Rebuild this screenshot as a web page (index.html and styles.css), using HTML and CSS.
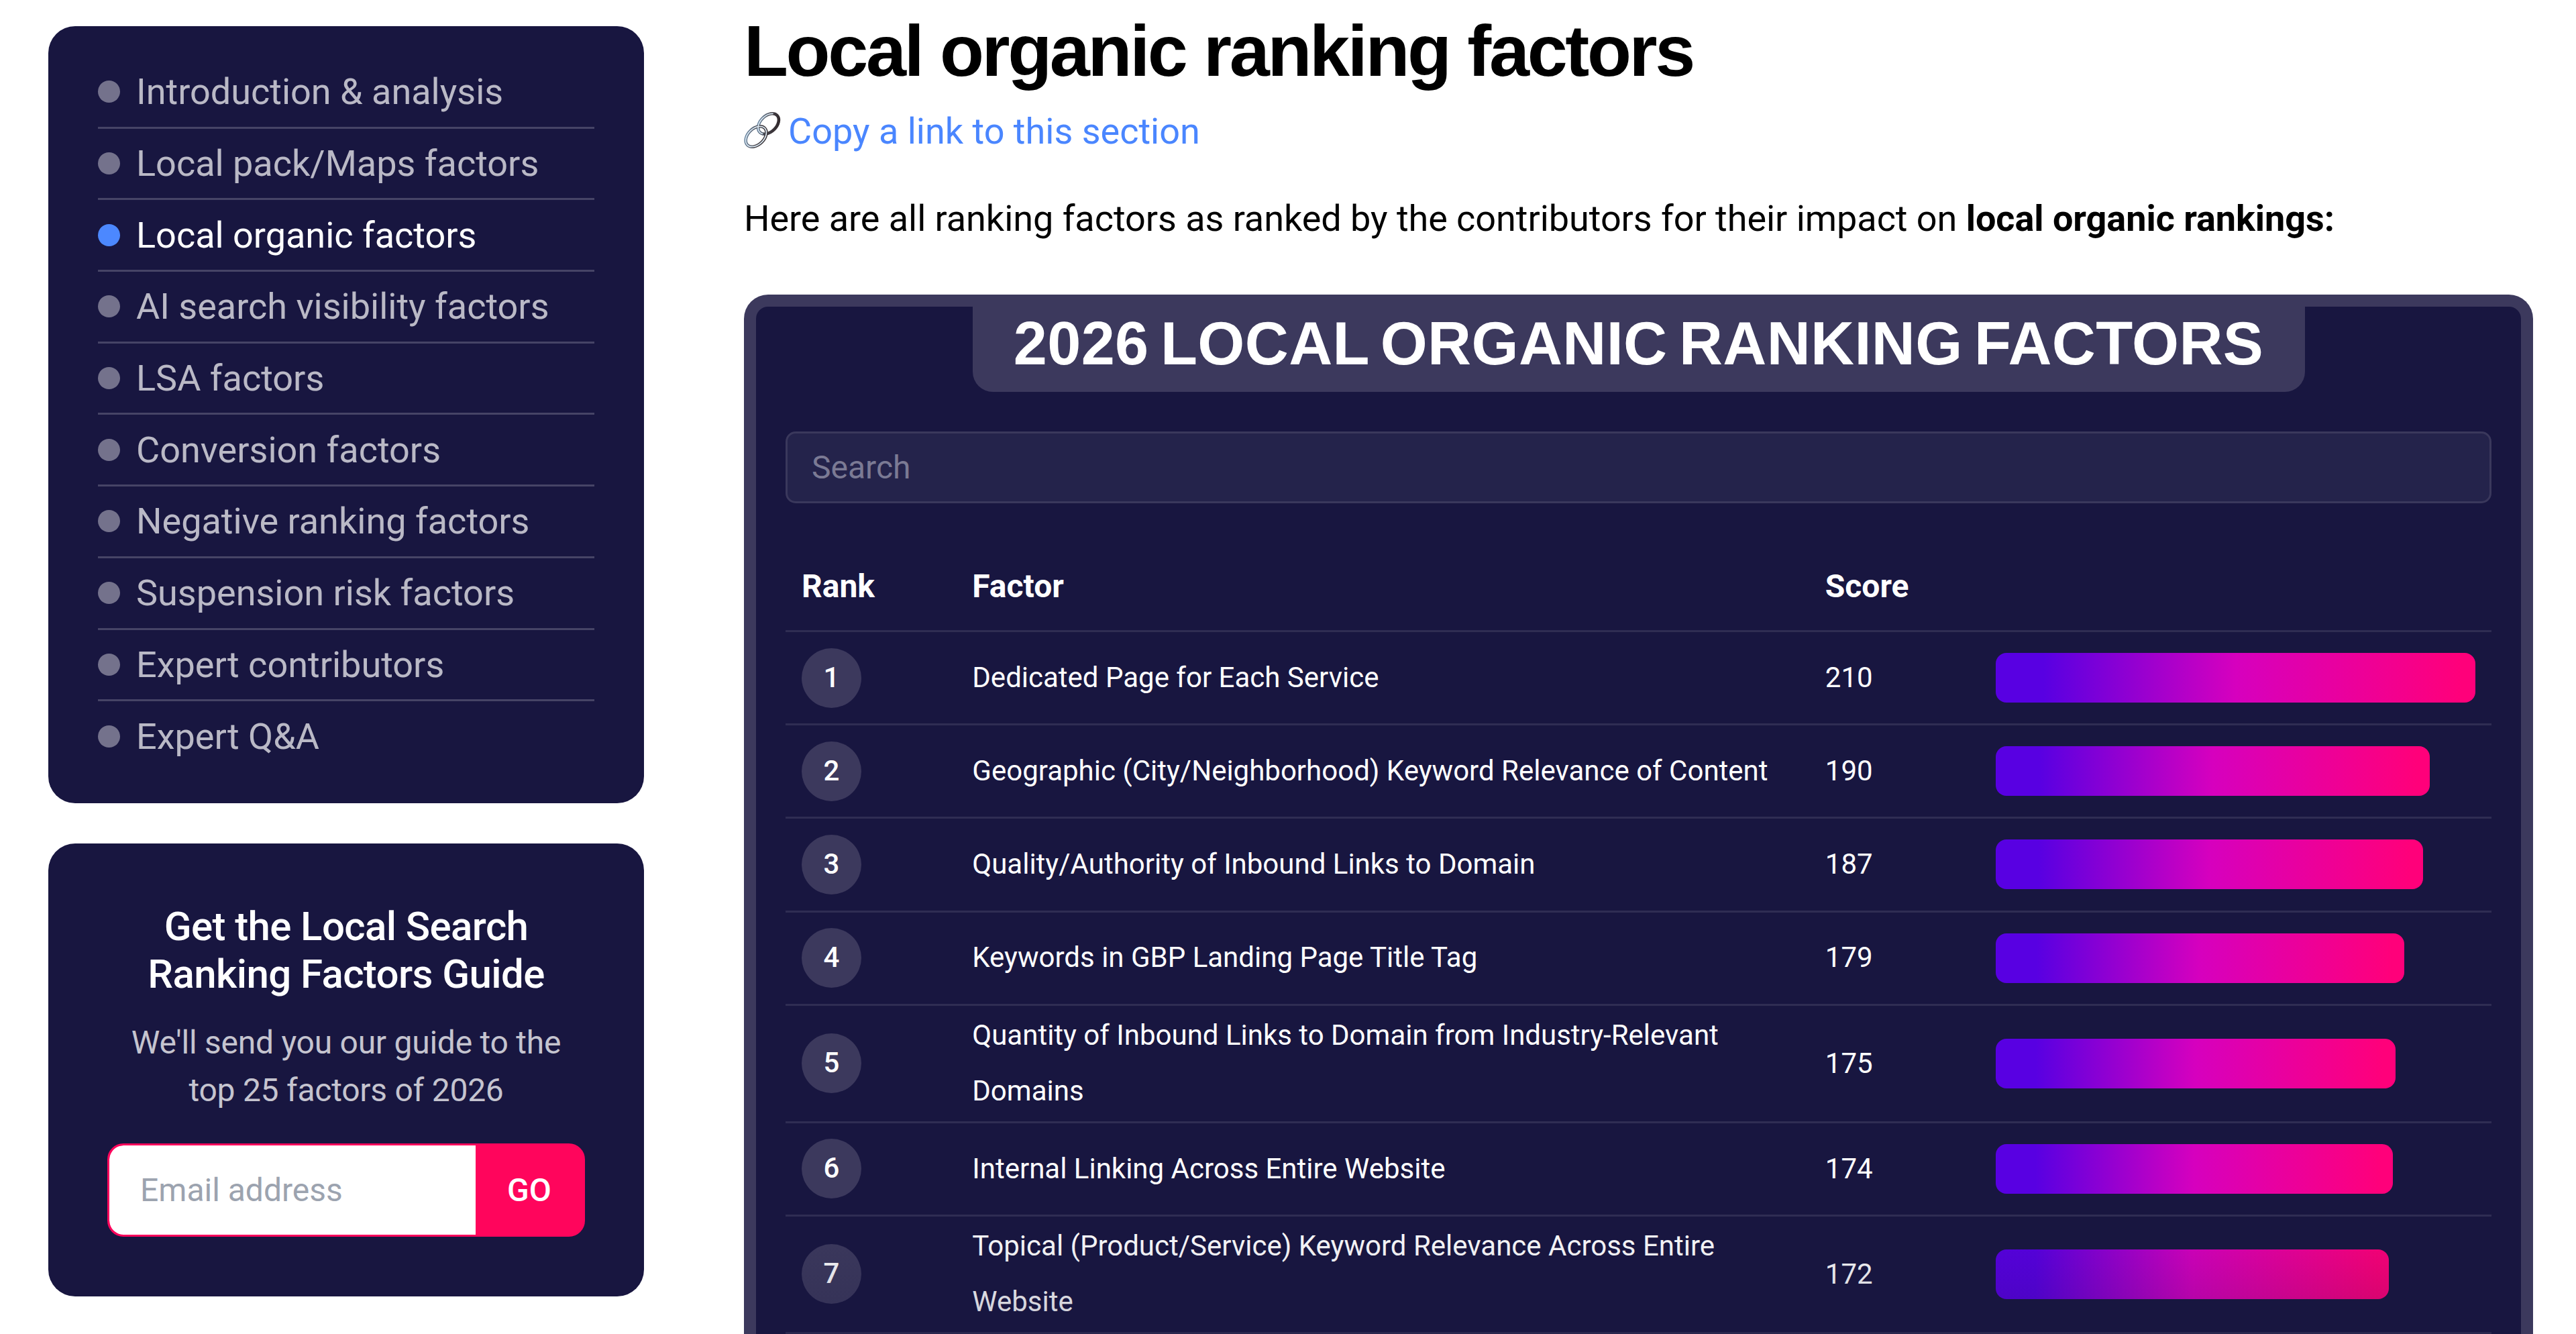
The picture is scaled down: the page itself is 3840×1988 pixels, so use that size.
FILE: index.html
```html
<!DOCTYPE html>
<html lang="en">
<head>
    <meta charset="UTF-8">
    <meta name="viewport" content="width=device-width, initial-scale=1.0">
    <title>Local Search Ranking Factors</title>
    <link rel="stylesheet" href="styles.css">
</head>
<body>
    <div class="page">
        <aside class="sidebar">
            <nav class="toc">
                <ul>
                    <li>Introduction &amp; analysis</li>
                    <li>Local pack/Maps factors</li>
                    <li class="active">Local organic factors</li>
                    <li>AI search visibility factors</li>
                    <li>LSA factors</li>
                    <li>Conversion factors</li>
                    <li>Negative ranking factors</li>
                    <li>Suspension risk factors</li>
                    <li>Expert contributors</li>
                    <li>Expert Q&amp;A</li>
                </ul>
            </nav>
            <section class="signup">
                <h3>Get the Local Search<br>Ranking Factors Guide</h3>
                <p>We'll send you our guide to the<br>top 25 factors of 2026</p>
                <form class="signupForm">
                    <input type="email" placeholder="Email address">
                    <button type="button">GO</button>
                </form>
            </section>
        </aside>
        <main class="content">
            <h2>Local organic ranking factors</h2>
            <a class="copyLink">
                <svg viewBox="0 0 54 60" fill="none">
                    <defs>
                        <linearGradient id="metal" x1="0" y1="0" x2="1" y2="1">
                            <stop offset="0" stop-color="#6f93b5"/>
                            <stop offset="0.5" stop-color="#45434a"/>
                            <stop offset="1" stop-color="#2c2224"/>
                        </linearGradient>
                    </defs>
                    <g stroke="url(#metal)" stroke-width="4.6">
                        <ellipse cx="36.5" cy="19.5" rx="18" ry="12" transform="rotate(-44 36.5 19.5)"/>
                        <ellipse cx="18" cy="38.5" rx="18" ry="12" transform="rotate(-44 18 38.5)"/>
                    </g>
                    <g stroke="#d9e6f0" stroke-width="1.8">
                        <ellipse cx="36.5" cy="19.5" rx="18" ry="12" transform="rotate(-44 36.5 19.5)" stroke-dasharray="46 50" stroke-dashoffset="-42"/>
                        <ellipse cx="18" cy="38.5" rx="18" ry="12" transform="rotate(-44 18 38.5)"/>
                    </g>
                </svg>
                <span>Copy a link to this section</span>
            </a>
            <p class="intro">Here are all ranking factors as ranked by the contributors for their impact on <b>local organic rankings:</b></p>
            <section class="panel">
                <h3 class="panelTitle">2026 LOCAL ORGANIC RANKING FACTORS</h3>
                <input class="search" type="text" placeholder="Search">
                <div class="row head">
                    <div>Rank</div>
                    <div>Factor</div>
                    <div>Score</div>
                    <div></div>
                </div>
                <div class="rows"></div>
                <div class="fade"></div>
            </section>
        </main>
    </div>
    <script>
        const factors = [
            { name: "Dedicated Page for Each Service", score: 210 },
            { name: "Geographic (City/Neighborhood) Keyword Relevance of Content", score: 190 },
            { name: "Quality/Authority of Inbound Links to Domain", score: 187 },
            { name: "Keywords in GBP Landing Page Title Tag", score: 179 },
            { name: "Quantity of Inbound Links to Domain from Industry-Relevant Domains", score: 175 },
            { name: "Internal Linking Across Entire Website", score: 174 },
            { name: "Topical (Product/Service) Keyword Relevance Across Entire Website", score: 172 }
        ];
        const maxScore = factors[0].score;
        let rows = document.querySelector(".rows");
        factors.forEach((item, i) => {
            const width = (item.score / maxScore * 100).toFixed(2);
            rows.innerHTML += `
                <div class="row">
                    <div><span class="rank">${i + 1}</span></div>
                    <div>${item.name}</div>
                    <div>${item.score}</div>
                    <div><div class="bar" style="width:${width}%"></div></div>
                </div>`;
        });
    </script>
</body>
</html>
```
FILE: styles.css
```css
*{
    box-sizing: border-box;
    margin: 0;
    padding: 0;
}
body{
    background-color: #fff;
    color: #000;
    font-family: Roboto, Arial, sans-serif;
    font-size: 54px;
}
input, button{
    font-family: inherit;
    font-size: 48px;
    border: none;
    outline: none;
}
.page{
    display: flex;
    gap: 149px;
    height: 100vh;
    padding: 0 64px 0 72px;
    overflow: hidden;
}

/* sidebar */
.sidebar{
    width: 888px;
    flex-shrink: 0;
    display: flex;
    flex-direction: column;
    gap: 60px;
    padding-top: 39px;
}
.toc, .signup{
    background-color: #181640;
    border-radius: 40px;
}
.toc{
    padding: 46px 74px 45px;
}
.toc ul{
    list-style: none;
}
.toc li{
    display: flex;
    align-items: center;
    gap: 24px;
    height: 106.7px;
    color: rgba(255, 255, 255, 0.7);
    border-bottom: 3px solid rgba(255, 255, 255, 0.2);
}
.toc li::before{
    content: "";
    width: 33px;
    height: 33px;
    border-radius: 50%;
    background-color: #74728c;
}
.toc li:last-child{
    border-bottom-color: transparent;
}
.toc li.active{
    color: #fff;
}
.toc li.active::before{
    background-color: #4c88ff;
}
.signup{
    padding: 88px 88px 89px;
    text-align: center;
    color: #fff;
}
.signup h3{
    font-size: 60px;
    font-weight: 500;
    line-height: 71px;
    letter-spacing: -0.6px;
}
.signup p{
    margin: 31px 0 44px;
    font-size: 48px;
    line-height: 71px;
    letter-spacing: -0.25px;
    color: rgba(255, 255, 255, 0.75);
}
.signupForm{
    display: flex;
    height: 139px;
    border: 3px solid #ff055c;
    border-radius: 24px;
    background-color: #ff055c;
    overflow: hidden;
}
.signupForm input{
    flex: 1;
    min-width: 0;
    padding-left: 46px;
    background-color: #fff;
    border-radius: 21px 0 0 21px;
}
.signupForm input::placeholder{
    color: #9ca3af;
}
.signupForm button{
    width: 160px;
    background-color: #ff055c;
    color: #fff;
    font-weight: 500;
}

/* main column */
.content{
    flex: 1;
    display: flex;
    flex-direction: column;
    padding-top: 16px;
}
.content h2{
    font-family: "Liberation Sans", Arial, sans-serif;
    font-size: 108px;
    line-height: 120px;
    letter-spacing: -3.36px;
    white-space: nowrap;
}
.copyLink{
    display: flex;
    align-items: center;
    gap: 12px;
    height: 86px;
    margin-top: 16px;
    color: #4a86ff;
}
.copyLink svg{
    width: 54px;
    height: 60px;
    overflow: visible;
}
.intro{
    margin-top: 45px;
    line-height: 86px;
    letter-spacing: -0.05px;
}
/* runs on under the fold, so no bottom edge */
.panel{
    position: relative;
    flex: 1;
    min-height: 0;
    margin-top: 70px;
    padding: 0 44px;
    border: 18px solid #3c395d;
    border-bottom: none;
    border-radius: 36px 36px 0 0;
    background-color: #181640;
    color: #fff;
    overflow: hidden;
}
.panelTitle{
    width: 1986px;
    height: 127px;
    margin: 0 auto;
    border-radius: 0 0 30px 30px;
    background-color: #3c395d;
    font-family: "Liberation Sans", Arial, sans-serif;
    font-size: 90px;
    line-height: 111px;
    letter-spacing: 0.4px;
    word-spacing: -8px;
    text-align: center;
    white-space: nowrap;
}
.search{
    display: block;
    width: 100%;
    height: 107px;
    margin-top: 59px;
    padding: 0 36px;
    border: 3px solid #3a385c;
    border-radius: 15px;
    background-color: #24234b;
    color: #fff;
}
.search::placeholder{
    color: #7b7a94;
}
.row{
    display: grid;
    grid-template-columns: 10% 50% 10% 30%;
    align-items: center;
    min-height: 139.2px;
    border-bottom: 3px solid #2f2d53;
    font-size: 42px;
    line-height: 82.5px;
}
.row > div{
    padding: 3.5px 24px;
}
.head{
    min-height: 133px;
    margin-top: 59px;
    font-size: 48px;
    font-weight: 700;
}
.rank{
    display: block;
    width: 89px;
    height: 89px;
    border-radius: 50%;
    background-color: #3c395d;
    font-weight: 500;
    line-height: 88px;
    text-align: center;
}
.bar{
    height: 74px;
    border-radius: 16px;
    background: linear-gradient(90deg, #5800e2 10%, #d600be 50%, #ff007a 97%);
}
/* bottom of the table fades out */
.fade{
    position: absolute;
    top: 1356px;
    left: 44px;
    right: 44px;
    bottom: 0;
    background: linear-gradient(rgba(24, 22, 64, 0), #181640 740px);
}
```
